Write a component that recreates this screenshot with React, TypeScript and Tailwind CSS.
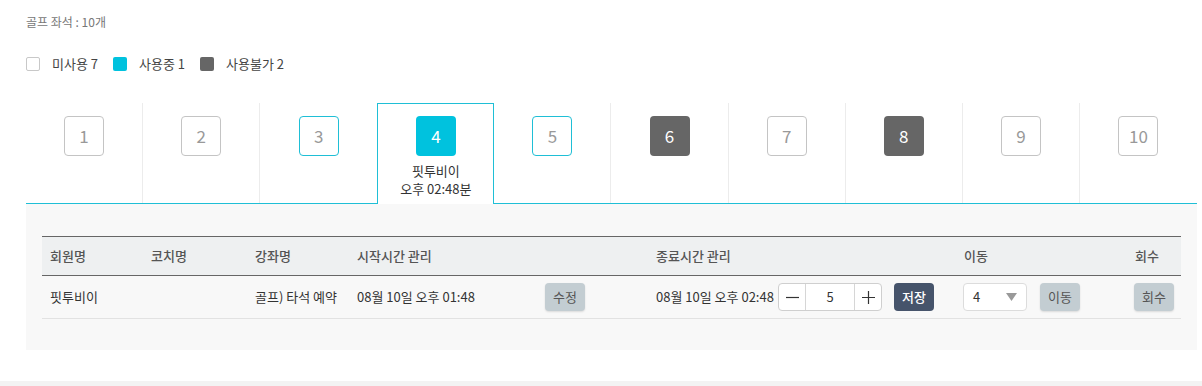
import React from 'react';

type SeatState = 'free' | 'used' | 'blocked' | 'reserved';

const seats: { no: number; state: SeatState }[] = [
    { no: 1, state: 'free' },
    { no: 2, state: 'free' },
    { no: 3, state: 'reserved' },
    { no: 4, state: 'used' },
    { no: 5, state: 'reserved' },
    { no: 6, state: 'blocked' },
    { no: 7, state: 'free' },
    { no: 8, state: 'blocked' },
    { no: 9, state: 'free' },
    { no: 10, state: 'free' },
];

const boxClass: Record<SeatState, string> = {
    free: 'border border-[#c4c4c4] text-[#999] bg-white',
    reserved: 'border border-[#1fbfd6] text-[#999] bg-white',
    used: 'bg-[#00c2de] text-white',
    blocked: 'bg-[#666666] text-white',
};

const cols = 'grid grid-cols-[101px_104px_102px_299px_308px_171px_54px]';

const GrayButton = ({ label }: { label: string }) => (
    <button className="h-[28px] w-[40px] rounded-[4px] bg-[#c3cdd2] text-[13px] text-[#555] shadow-[0_1px_2px_rgba(0,0,0,0.12)]">
        {label}
    </button>
);

export default function App() {
    return (
        <div className="min-h-[386px] bg-white font-['Noto_Sans_CJK_KR','Noto_Sans',sans-serif]">
            <div className="pl-[26px] pr-[5px] pt-[14px]">
                <div className="text-[12px] leading-[16px] text-[#777]">골프 좌석 : 10개</div>

                {/* legend */}
                <div className="mt-[26px] flex h-[16px] items-center gap-[15px] text-[13px] text-[#444]">
                    <div className="flex items-center">
                        <span className="h-[14px] w-[14px] rounded-[2px] border border-[#c8c8c8] bg-white" />
                        <span className="ml-[12px]">미사용 7</span>
                    </div>
                    <div className="flex items-center">
                        <span className="h-[14px] w-[14px] rounded-[2px] bg-[#00c2de]" />
                        <span className="ml-[12px]">사용중 1</span>
                    </div>
                    <div className="flex items-center">
                        <span className="h-[14px] w-[14px] rounded-[2px] bg-[#666]" />
                        <span className="ml-[12px]">사용불가 2</span>
                    </div>
                </div>

                {/* seats */}
                <div className="mt-[31px] grid grid-cols-10">
                    {seats.map((s, i) => {
                        const active = s.state === 'used';
                        const next = seats[i + 1];
                        const showDivider = i < 9 && !(next && next.state === 'used');
                        if (active) {
                            return (
                                <div key={s.no} className="flex h-[101px] flex-col bg-[#1fbfd6] px-px pt-px">
                                    <div className="flex flex-1 flex-col items-center bg-white">
                                        <div className="mt-[12px] flex h-[40px] w-[40px] items-center justify-center rounded-[4px] bg-[#00c2de] text-[17px] text-white">
                                            {s.no}
                                        </div>
                                        <div className="mt-[6px] text-center text-[13px] leading-[18px] text-[#333]">
                                            <div>핏투비이</div>
                                            <div>오후 02:48분</div>
                                        </div>
                                    </div>
                                </div>
                            );
                        }
                        return (
                            <div key={s.no} className="flex h-[101px] flex-col">
                                <div className="flex flex-1">
                                    <div className="flex flex-1 justify-center">
                                        <div
                                            className={
                                                'mt-[13px] flex h-[40px] w-[40px] items-center justify-center rounded-[4px] text-[17px] ' +
                                                boxClass[s.state]
                                            }
                                        >
                                            {s.no}
                                        </div>
                                    </div>
                                    {showDivider && <div className="w-px bg-[#ececec]" />}
                                </div>
                                <div className="h-px bg-[#1fbfd6]" />
                            </div>
                        );
                    })}
                </div>

                {/* detail panel */}
                <div className="bg-[#f8f8f8] px-[16px] pb-[31px] pt-[32px]">
                    <div className={cols + ' h-[40px] items-center border-y border-[#666] bg-[#eef0f1] text-[13px] font-medium text-[#555]'}>
                        <div className="pl-[8px]">회원명</div>
                        <div className="pl-[8px]">코치명</div>
                        <div className="pl-[8px]">강좌명</div>
                        <div className="pl-[8px]">시작시간 관리</div>
                        <div className="pl-[8px]">종료시간 관리</div>
                        <div className="pl-[8px]">이동</div>
                        <div className="pl-[8px]">회수</div>
                    </div>
                    <div className={cols + ' h-[43px] items-center border-b border-[#e2e2e2] text-[13px] text-[#333]'}>
                        <div className="pl-[8px]">핏투비이</div>
                        <div className="pl-[8px]" />
                        <div className="pl-[8px]">골프) 타석 예약</div>
                        <div className="flex items-center pl-[8px]">
                            <span className="w-[188px]">08월 10일 오후 01:48</span>
                            <GrayButton label="수정" />
                        </div>
                        <div className="flex items-center pl-[8px]">
                            <span className="w-[122px]">08월 10일 오후 02:48</span>
                            <div className="flex h-[28px] w-[104px] items-stretch rounded-[4px] border border-[#cfcfcf] bg-white">
                                <button className="flex w-[27px] items-center justify-center border-r border-[#d6d6d6]">
                                    <svg width="13" height="13" viewBox="0 0 13 13"><path d="M0 6.5h13" stroke="#333" strokeWidth="1.2" /></svg>
                                </button>
                                <div className="flex flex-1 items-center justify-center text-[13px] text-[#333]">5</div>
                                <button className="flex w-[27px] items-center justify-center border-l border-[#d6d6d6]">
                                    <svg width="13" height="13" viewBox="0 0 13 13"><path d="M0 6.5h13M6.5 0v13" stroke="#333" strokeWidth="1.2" /></svg>
                                </button>
                            </div>
                            <button className="ml-[12px] h-[28px] w-[40px] rounded-[4px] bg-[#46546b] text-[13px] font-medium text-white">
                                저장
                            </button>
                        </div>
                        <div className="flex items-center pl-[7px]">
                            <div className="flex h-[28px] w-[64px] items-center justify-between rounded-[4px] border border-[#dcdcdc] bg-white pl-[9px] pr-[9px]">
                                <span className="text-[13px] text-[#333]">4</span>
                                <svg width="11" height="8" viewBox="0 0 11 8"><path d="M0 0h11L5.5 8z" fill="#999" /></svg>
                            </div>
                            <div className="ml-[13px]">
                                <GrayButton label="이동" />
                            </div>
                        </div>
                        <div className="pl-[7px]">
                            <GrayButton label="회수" />
                        </div>
                    </div>
                </div>
            </div>
            <div className="mt-[31px] h-[10px] bg-[#f3f3f3]" />
        </div>
    );
}
